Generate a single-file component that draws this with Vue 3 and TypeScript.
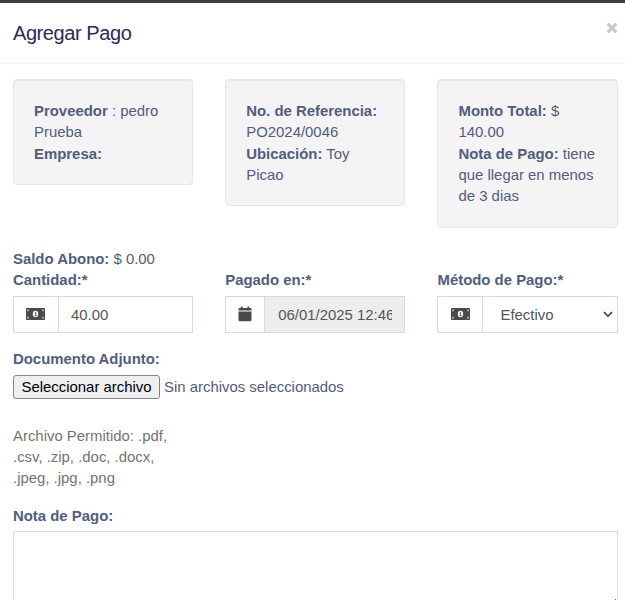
<script setup lang="ts">
import { ref } from 'vue'

const amount = ref('40.00')
const paidOn = ref('06/01/2025 12:46')
const method = ref('Efectivo')
const note = ref('')
</script>

<template>
  <div class="modal">
    <header class="head">
      <h4 class="title">Agregar Pago</h4>
      <button class="close" type="button" aria-label="Cerrar">
        <svg width="12" height="12" viewBox="0 0 12 12"><path d="M1.6 1.6L10.4 10.4M10.4 1.6L1.6 10.4" stroke="#c8c8c8" stroke-width="3.1" /></svg>
      </button>
    </header>
    <main class="body">
      <div class="row wells">
        <div class="well"><strong>Proveedor</strong> : pedro Prueba<br /><strong>Empresa:</strong></div>
        <div class="well"><strong>No. de Referencia:</strong> PO2024/0046<br /><strong>Ubicación:</strong> Toy Picao</div>
        <div class="well"><strong>Monto Total:</strong> $ 140.00<br /><strong>Nota de Pago:</strong> tiene que llegar en menos de 3 dias</div>
      </div>
      <div class="balance"><strong>Saldo Abono:</strong> $ 0.00</div>
      <div class="row fields">
        <div class="field">
          <label>Cantidad:*</label>
          <div class="group">
            <span class="addon cash">
              <svg width="19" height="12" viewBox="0 0 19 12">
                <rect width="19" height="12" rx="1" fill="#4a4a4a" />
                <path d="M1.8 3.2V2H3M16 2H17.2V3.2M17.2 8.8V10H16M3 10H1.8V8.8" fill="none" stroke="#fff" stroke-width=".9" />
                <ellipse cx="9.5" cy="6" rx="2.7" ry="3.2" fill="#fff" />
                <path d="M8.7 4.8L9.7 4.2V7.6M8.5 7.7H10.7" fill="none" stroke="#4a4a4a" stroke-width=".9" />
              </svg>
            </span>
            <input v-model="amount" class="control" type="text" />
          </div>
        </div>
        <div class="field">
          <label>Pagado en:*</label>
          <div class="group">
            <span class="addon date">
              <svg width="14" height="16" viewBox="0 0 14 16">
                <path d="M.5 4.6V3.3Q.5 2 1.8 2H2.8V.6H4.6V2H9.4V.6H11.2V2H12.2Q13.5 2 13.5 3.3V4.6ZM.5 5.6H13.5V14Q13.5 15.3 12.2 15.3H1.8Q.5 15.3.5 14Z" fill="#4a4a4a" />
              </svg>
            </span>
            <input v-model="paidOn" class="control readonly" type="text" readonly />
          </div>
        </div>
        <div class="field">
          <label>Método de Pago:*</label>
          <div class="group">
            <span class="addon">
              <svg width="19" height="12" viewBox="0 0 19 12">
                <rect width="19" height="12" rx="1" fill="#4a4a4a" />
                <path d="M1.8 3.2V2H3M16 2H17.2V3.2M17.2 8.8V10H16M3 10H1.8V8.8" fill="none" stroke="#fff" stroke-width=".9" />
                <ellipse cx="9.5" cy="6" rx="2.7" ry="3.2" fill="#fff" />
                <path d="M8.7 4.8L9.7 4.2V7.6M8.5 7.7H10.7" fill="none" stroke="#4a4a4a" stroke-width=".9" />
              </svg>
            </span>
            <div class="control select" role="combobox" tabindex="0">
              <span>{{ method }}</span>
              <svg width="10" height="7" viewBox="0 0 10 7"><path d="M1 1L5 5.2L9 1" fill="none" stroke="#333" stroke-width="1.5" /></svg>
            </div>
          </div>
        </div>
      </div>
      <div class="attachment">
        <label>Documento Adjunto:</label>
        <div class="file">
          <button class="pick" type="button">Seleccionar archivo</button>
          <span>Sin archivos seleccionados</span>
        </div>
        <p class="help">Archivo Permitido: .pdf, .csv, .zip, .doc, .docx, .jpeg, .jpg, .png</p>
      </div>
      <div class="notes">
        <label>Nota de Pago:</label>
        <textarea v-model="note"></textarea>
      </div>
    </main>
  </div>
</template>

<style>
body {
  margin: 0;
  overflow: hidden;
}
</style>

<style scoped>
.modal {
  box-sizing: border-box;
  height: 600px;
  overflow: hidden;
  border-top: 3px solid #3e3c3d;
  background: #fff;
  color: #505d83;
  font: 14.92px/21.35px "Liberation Sans", Arial, sans-serif;
}
.head {
  box-sizing: border-box;
  height: 61px;
  display: flex;
  justify-content: space-between;
  align-items: flex-start;
  padding: 18px 7px 0 13px;
  border-bottom: 1px solid #f1f1f1;
}
.title {
  margin: 0;
  font: 400 20px/24px "Liberation Sans", Arial, sans-serif;
  letter-spacing: -0.42px;
  color: #2b2a60;
}
.close {
  display: flex;
  margin-top: 1px;
  padding: 0;
  border: 0;
  background: none;
}
.body {
  padding: 15px 7.3px 0 13px;
}
.row {
  display: grid;
  grid-template-columns: repeat(3, minmax(0, 1fr));
  column-gap: 32px;
}
.wells {
  align-items: start;
}
.well {
  padding: 20px;
  border: 1px solid #e6e6e6;
  border-radius: 4px;
  background: #f4f4f4;
  box-shadow: inset 0 1px 1px rgba(0, 0, 0, 0.05);
}
.balance {
  margin-top: 20.4px;
}
label {
  display: block;
  font-weight: 700;
}
.group {
  box-sizing: border-box;
  display: flex;
  height: 36.5px;
  margin-top: 5.4px;
  border: 1px solid #d5d8e6;
}
.addon {
  box-sizing: border-box;
  display: flex;
  flex: 0 0 45px;
  align-items: center;
  justify-content: center;
  border-right: 1px solid #d5d8e6;
}
.addon.cash {
  padding-right: 2px;
}
.addon.date {
  flex-basis: 39px;
}
.control {
  box-sizing: border-box;
  flex: 1;
  min-width: 0;
  padding: 0 12px;
  border: 0;
  border-radius: 0;
  outline: 0;
  background: #fff;
  color: #555;
  font: inherit;
}
.readonly {
  background: #ededed;
  padding-left: 13px;
}
.select {
  display: flex;
  align-items: center;
  justify-content: space-between;
  padding: 0 4px 0 17px;
}
.attachment {
  margin-top: 15.5px;
}
.file {
  display: flex;
  align-items: center;
  gap: 4px;
  height: 24px;
  margin-top: 5px;
}
.pick {
  box-sizing: border-box;
  width: 147px;
  height: 24px;
  padding: 0;
  border: 1px solid #858585;
  border-radius: 3px;
  background: #efefef;
  color: #000;
  font: inherit;
  line-height: 20px;
  white-space: nowrap;
}
.help {
  width: 180px;
  margin: 26px 0 0;
  color: #737373;
}
.notes {
  margin-top: 16px;
}
textarea {
  box-sizing: border-box;
  display: block;
  width: 100%;
  height: 77px;
  margin-top: 5px;
  padding: 6px 12px;
  border: 1px solid #d9dce3;
  border-radius: 0;
  outline: 0;
  font: inherit;
}
</style>
